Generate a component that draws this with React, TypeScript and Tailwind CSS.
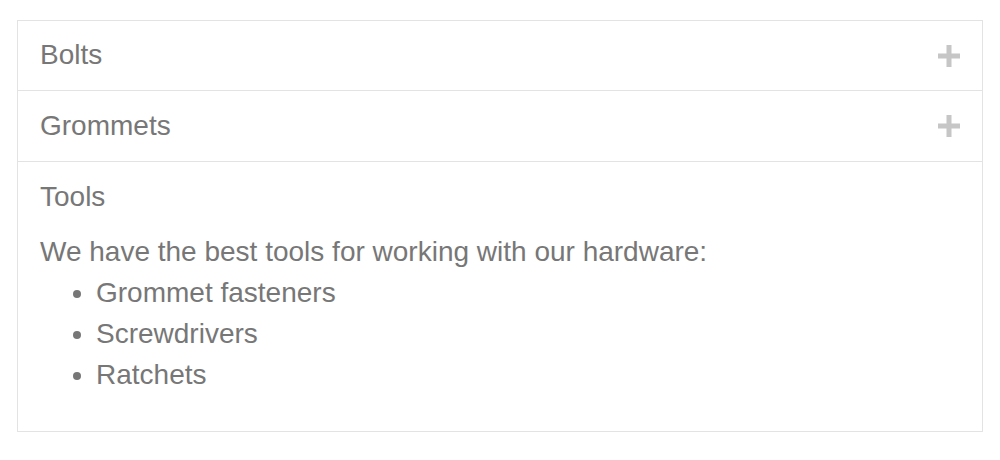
import { useState } from 'react'

const sections = [
  { title: 'Bolts', body: null },
  { title: 'Grommets', body: null },
  {
    title: 'Tools',
    body: {
      intro: 'We have the best tools for working with our hardware:',
      items: ['Grommet fasteners', 'Screwdrivers', 'Ratchets'],
    },
  },
]

function PlusIcon() {
  return (
    <svg width="22" height="22" viewBox="0 0 22 22" aria-hidden="true">
      <rect x="8.5" y="0" width="5" height="22" fill="#c6c6c6" />
      <rect x="0" y="8.5" width="22" height="5" fill="#c6c6c6" />
    </svg>
  )
}

export default function App() {
  const [open, setOpen] = useState(2)

  return (
    <div className="w-[1000px] h-[460px] bg-white pt-5 pl-[17px] font-['Liberation_Sans',Arial,sans-serif] text-[#777777]">
      <div className="w-[966px] border border-[#e3e3e3]">
        {sections.map((s, i) => {
          const isOpen = open === i
          return (
            <div key={s.title} className={i < sections.length - 1 ? 'border-b border-[#e3e3e3]' : ''}>
              <button
                className={
                  i === 0
                    ? 'flex w-full h-[69px] items-center justify-between px-[22px] text-left text-[28px] leading-[40px]'
                    : 'flex w-full h-[70px] items-center justify-between px-[22px] text-left text-[28px] leading-[40px]'
                }
                onClick={() => setOpen(isOpen ? -1 : i)}
              >
                <span className="-mt-px">{s.title}</span>
                {!isOpen && <PlusIcon />}
              </button>
              {isOpen && s.body && (
                <div className="-mt-px px-[22px] pb-[36px] text-[28px] leading-[41px]">
                  <p>{s.body.intro}</p>
                  <ul className="list-disc pl-[56px] marker:text-[#777777]">
                    {s.body.items.map((item) => (
                      <li key={item}>{item}</li>
                    ))}
                  </ul>
                </div>
              )}
            </div>
          )
        })}
      </div>
    </div>
  )
}
